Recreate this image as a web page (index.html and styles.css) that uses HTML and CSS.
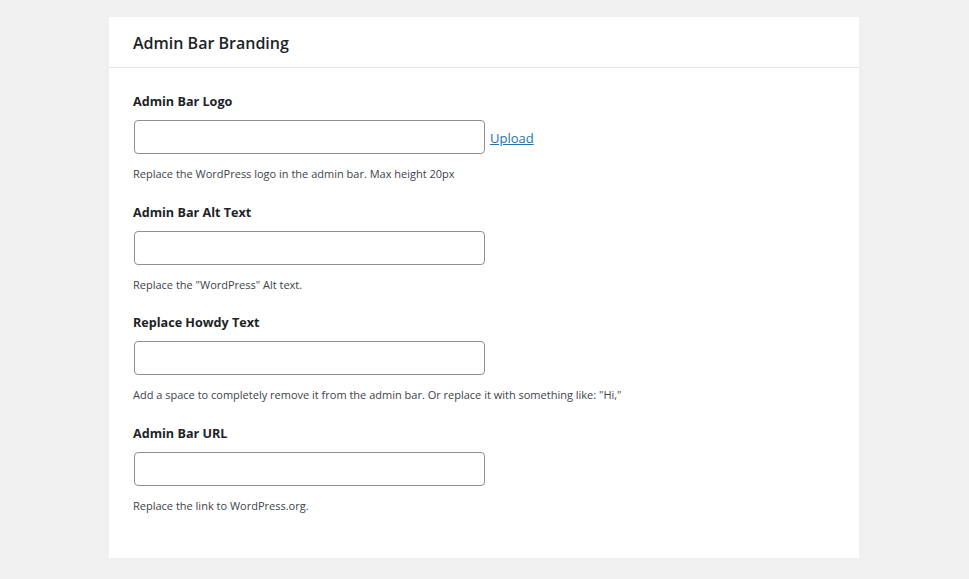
FILE: index.html
```html
<!DOCTYPE html>
<html>
<head>
<meta charset="utf-8">
<link rel="stylesheet" href="styles.css">
</head>
<body>
<div class="card">
  <div class="card-header"><h2 class="card-title">Admin Bar Branding</h2></div>
  <div class="card-body">
    <div class="field">
      <label class="field-label">Admin Bar Logo</label>
      <div class="field-row"><input class="field-input" type="text"><a class="upload" href="#">Upload</a></div>
      <p class="field-desc">Replace the WordPress logo in the admin bar. Max height 20px</p>
    </div>
    <div class="field">
      <label class="field-label">Admin Bar Alt Text</label>
      <div class="field-row"><input class="field-input" type="text"></div>
      <p class="field-desc">Replace the "WordPress" Alt text.</p>
    </div>
    <div class="field">
      <label class="field-label">Replace Howdy Text</label>
      <div class="field-row"><input class="field-input" type="text"></div>
      <p class="field-desc">Add a space to completely remove it from the admin bar. Or replace it with something like: "Hi,"</p>
    </div>
    <div class="field">
      <label class="field-label">Admin Bar URL</label>
      <div class="field-row"><input class="field-input" type="text"></div>
      <p class="field-desc">Replace the link to WordPress.org.</p>
    </div>
  </div>
</div>
</body>
</html>
```
FILE: styles.css
```css
html, body { margin: 0; padding: 0; }
body {
  background: #f0f0f1;
  font-family: "Open Sans", "Noto Sans", sans-serif;
  color: #1d2327;
  padding-top: 17px;
  height: 579px;
  box-sizing: border-box;
}
.card {
  width: 750px;
  height: 541px;
  margin: 0 auto 0 109px;
  background: #fff;
  box-sizing: border-box;
}
.card-header {
  height: 51px;
  border-bottom: 1px solid #e8e8e8;
  box-sizing: border-box;
  display: flex;
  align-items: center;
  padding: 0 24px;
}
.card-title {
  margin: 0;
  font-size: 16px;
  font-weight: 600;
  color: #1d2327;
  line-height: 20px;
  padding-top: 2px;
}
.card-body {
  padding: 24px 24px 0 24px;
}
.field { margin-bottom: 21px; }
.field:nth-child(2) { margin-bottom: 20px; }
.field-label {
  display: block;
  font-size: 12.6px;
  font-weight: 700;
  line-height: 20px;
  color: #1d2327;
  margin-bottom: 8px;
}
.field-row {
  display: flex;
  align-items: center;
  padding-left: 1px;
}
.field-input {
  width: 351px;
  height: 34px;
  box-sizing: border-box;
  border: 1px solid #8c8f94;
  border-radius: 4px;
  margin: 0;
  padding: 0 8px;
  background: #fff;
  font: inherit;
}
.upload {
  margin-left: 5px;
  padding-top: 2px;
  font-size: 13px;
  color: #2271b1;
  text-decoration: underline;
  line-height: 20px;
}
.field-desc {
  margin: 12px 0 0 0;
  font-size: 11px;
  line-height: 16px;
  color: #3c434a;
}
```
